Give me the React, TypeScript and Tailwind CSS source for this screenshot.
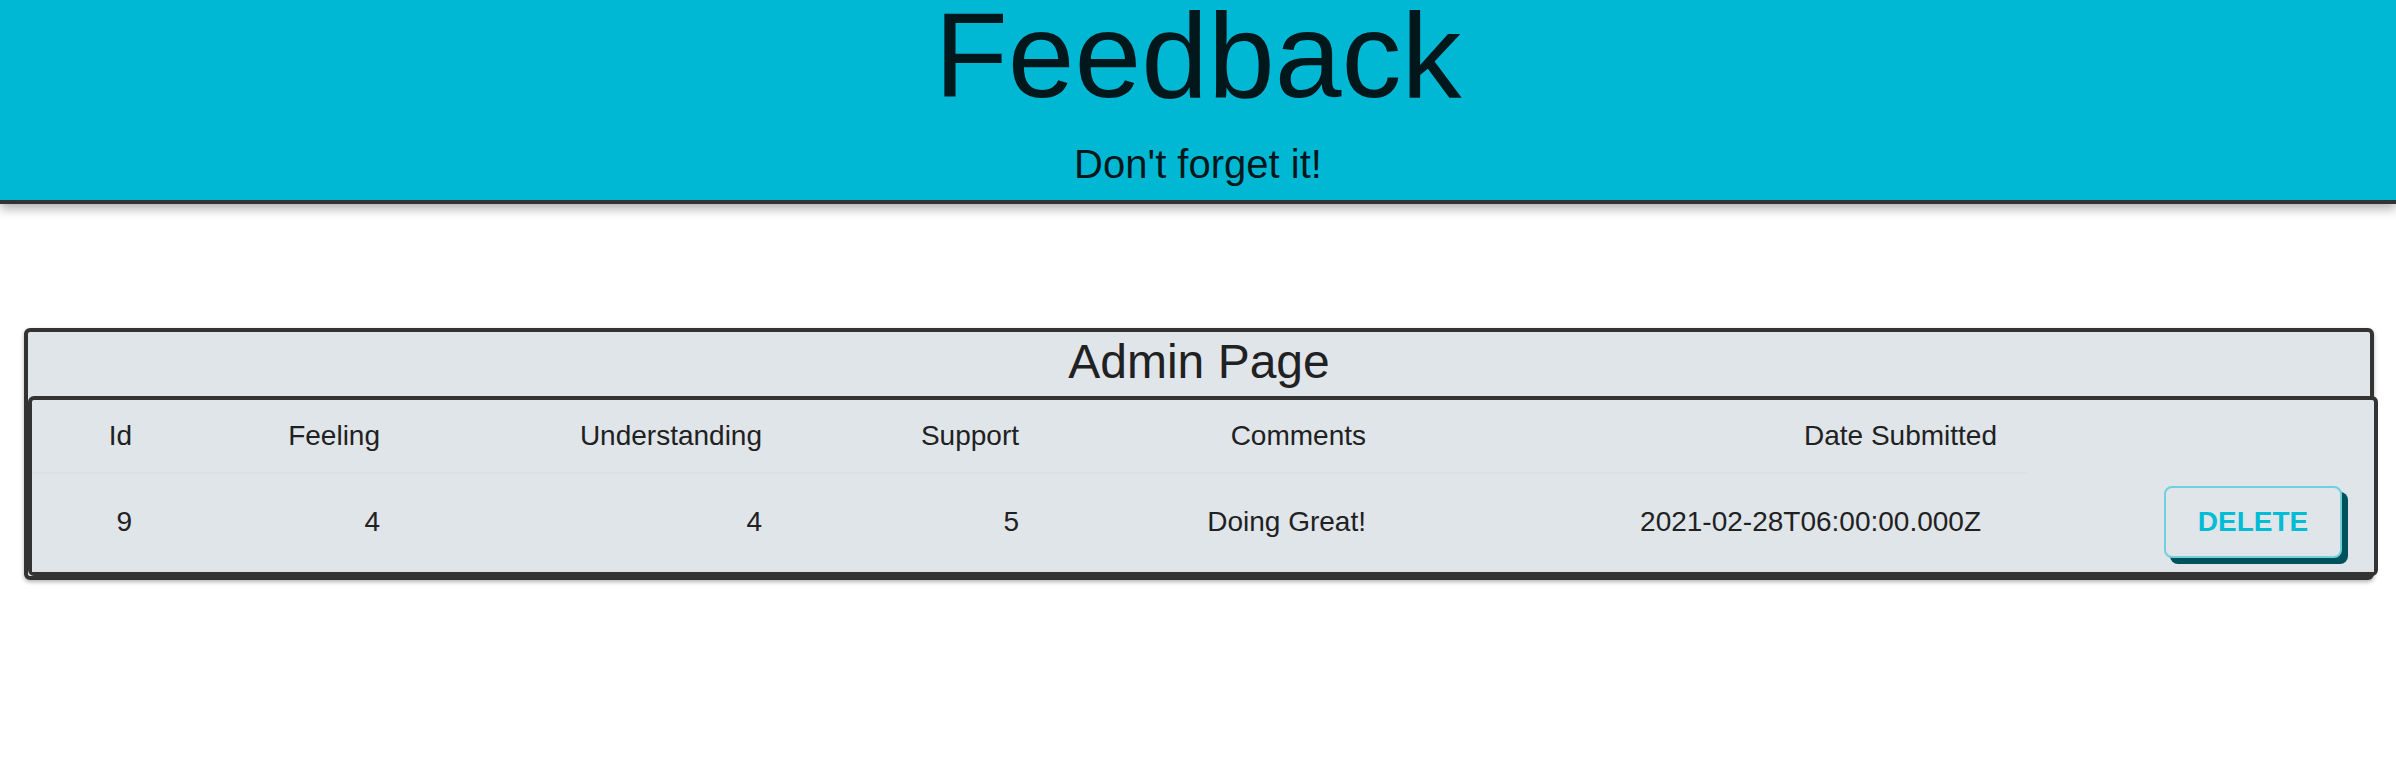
const font = "font-['Liberation_Sans',Arial,Helvetica,sans-serif]";

const headers = ['Id', 'Feeling', 'Understanding', 'Support', 'Comments', 'Date Submitted'];

const rows = [
    {
        id: 9,
        feeling: 4,
        understanding: 4,
        support: 5,
        comments: 'Doing Great!',
        date: '2021-02-28T06:00:00.000Z',
    },
];

const Header = () => (
    <header className="box-border h-[204px] border-b-4 border-[#333333] bg-[#00b8d4] pt-[1px] text-center text-[#00181c] shadow-[0_5px_10px_rgba(0,0,0,0.3)]">
        <h1 className="-mt-[6px] h-[120px] text-[120px] font-light leading-[120px]">Feedback</h1>
        <p className="mt-[25px] text-[40px] leading-[48px]">Don't forget it!</p>
    </header>
);

const AdminTable = () => {
    // header cells get the rule below them, the delete column has no header
    const headCell = 'border-b-2 border-[#e0e0e0] py-[12px] pl-[32px] text-right leading-[48px]';
    const bodyCell =
        'flex items-center justify-end border-b-2 border-[#e0e0e0] py-[12px] pl-[32px] pr-[48px] leading-[40px]';

    return (
        <div className="grid grid-cols-[148px_248px_382px_257px_347px_615px_345px] text-[28px] text-[#1f2122]">
            {headers.map((h, i) => (
                <div
                    key={h}
                    className={`${headCell} ${i === headers.length - 1 ? 'pr-[32px]' : 'pr-[48px]'}`}
                >
                    {h}
                </div>
            ))}
            <div />

            {rows.map((row) => (
                <div key={row.id} className="contents">
                    <div className={bodyCell}>{row.id}</div>
                    <div className={bodyCell}>{row.feeling}</div>
                    <div className={bodyCell}>{row.understanding}</div>
                    <div className={bodyCell}>{row.support}</div>
                    <div className={bodyCell}>{row.comments}</div>
                    <div className={bodyCell}>{row.date}</div>
                    <div className="flex items-center justify-end border-b-2 border-[#e0e0e0] py-[12px] pl-[32px] pr-[32px]">
                        <button
                            type="button"
                            className="box-border h-[72px] w-[178px] rounded-[8px] border-2 border-[#70d0de] bg-[#dfe5e8] text-[28px] font-bold leading-none text-[#00bcd4] shadow-[6px_6px_0_#01525b]"
                        >
                            DELETE
                        </button>
                    </div>
                </div>
            ))}
        </div>
    );
};

export default function App() {
    return (
        <div className={`${font} min-h-[778px] bg-white`}>
            <Header />
            <div className="ml-[24px] mr-[22px] mt-[124px] rounded-[6px] border-4 border-[#333333] bg-[#dfe5e8] shadow-[0_2px_4px_rgba(0,0,0,0.3)]">
                <h2 className="pb-[4px] text-center text-[48px] leading-[60px] text-[#1f2122]">Admin Page</h2>
                <div className="box-content w-full rounded-[6px] border-4 border-[#333333] bg-[#dfe5e8]">
                    <AdminTable />
                </div>
            </div>
        </div>
    );
}
